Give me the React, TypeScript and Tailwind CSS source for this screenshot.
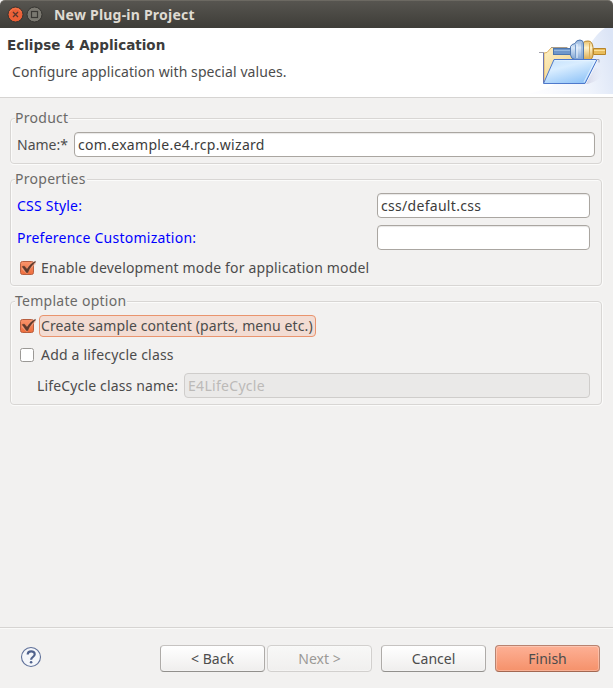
import type { ReactNode } from "react";

function Group({ title, className, children }: { title: string; className: string; children: ReactNode }) {
  return (
    <section className={`flex flex-col rounded-[4px] border border-[#d8d6d4] shadow-[0_1px_0_#fbfbfa,1px_0_0_#fbfbfa,inset_0_1px_0_#fbfbfa,inset_1px_0_0_#fbfbfa] ${className}`}>
      <h2 className="-mt-[11px] ml-1 h-5 shrink-0 self-start bg-[#f2f1f0] pr-px text-[14px] leading-5 tracking-[0.27px] text-[#6b6a68]">{title}</h2>
      {children}
    </section>
  );
}

function Field({ value, className, disabled = false }: { value: string; className: string; disabled?: boolean }) {
  const look = disabled
    ? "border-[#cfcdcb] bg-[#eae9e8] text-[#bcbab8] tracking-[0.3px]"
    : "border-[#aaa6a1] bg-white text-[#3c3c3c] tracking-[0.3px] shadow-[inset_0_1px_1px_#e8e7e6]";
  return <div className={`h-[25px] shrink-0 rounded-[4px] border pl-[3px] text-[14px] leading-[23px] ${look} ${className}`}>{value}</div>;
}

function CheckBox({ checked }: { checked: boolean }) {
  return (
    <svg width="18" height="18" viewBox="0 0 18 18" className="block shrink-0">
      <defs>
        <linearGradient id="check-fill" x1="0" y1="0" x2="0" y2="1">
          <stop offset="0" stopColor="#f9946c" />
          <stop offset="1" stopColor="#ee6d3c" />
        </linearGradient>
      </defs>
      <rect x="1.5" y="2.5" width="13" height="13" rx="2" fill={checked ? "url(#check-fill)" : "#fff"} stroke={checked ? "#b75f40" : "#9b9996"} />
      {checked && <path d="M3.7 8.6 7.6 12.4C9.4 9 12 6 16 3.4" fill="none" stroke="#fbb296" strokeWidth="3.6" strokeOpacity=".6" />}
      {checked && <path d="M3 7.6 5.3 6.9 8 10C10 6.8 12.6 4.2 16.3 2.3l.5.7C13.4 5.6 11 8.8 8.8 13.8H7.4Z" fill="#5f3a2c" stroke="#5f3a2c" strokeWidth=".3" />}
    </svg>
  );
}

function FolderArt() {
  return (
    <svg width="90" height="69" viewBox="0 0 90 69" className="block shrink-0">
      <defs>
        <linearGradient id="backdrop" x1="0" y1=".5" x2="1" y2=".3">
          <stop offset="0" stopColor="#fdfdff" />
          <stop offset=".6" stopColor="#f0f4fc" />
          <stop offset="1" stopColor="#dce5f6" />
        </linearGradient>
        <linearGradient id="folder-front" x1="0" y1="0" x2=".6" y2="1">
          <stop offset="0" stopColor="#c3e0fc" />
          <stop offset=".4" stopColor="#d9edff" />
          <stop offset="1" stopColor="#94c6f8" />
        </linearGradient>
        <linearGradient id="folder-back" x1="0" y1="0" x2="1" y2="1">
          <stop offset="0" stopColor="#fff1c5" />
          <stop offset="1" stopColor="#eac575" />
        </linearGradient>
        <linearGradient id="blue-plug" x1="0" y1="0" x2="0" y2="1">
          <stop offset="0" stopColor="#8fb0da" />
          <stop offset=".35" stopColor="#d8e7f8" />
          <stop offset="1" stopColor="#6c94c9" />
        </linearGradient>
        <linearGradient id="gold-plug" x1="0" y1="0" x2="0" y2="1">
          <stop offset="0" stopColor="#e9c16c" />
          <stop offset=".35" stopColor="#fff3cb" />
          <stop offset="1" stopColor="#d9a443" />
        </linearGradient>
        <linearGradient id="folder-shade" x1="0" y1="0" x2="1" y2="0">
          <stop offset="0" stopColor="#d3d4e6" />
          <stop offset="1" stopColor="#e5eaf6" stopOpacity="0" />
        </linearGradient>
      </defs>
      <path d="M90 0H82C74 5 68 14 63 24 56 38 45 48 30 57 22 61 14 64 5 66H90Z" fill="url(#backdrop)" />
      <path d="M63 56 72 40C84 41 83 50 65 56Z" fill="url(#folder-shade)" />
      <path d="M21 54V25l3-.5 4.5-5H44l2 3h19v13L62 54Z" fill="url(#folder-back)" stroke="#dcae5e" />
      <path d="M28 19.5H44l2 3" fill="none" stroke="#a99b87" />
      <path d="M20.5 55V24.5H16" fill="none" stroke="#7078ae" />
      <path d="M16 24.5h5" stroke="#a3a3ad" />
      <rect x="30.5" y="20.5" width="18" height="6" fill="#6f97ca" stroke="#4d76ae" />
      <path d="M31 22.5h17" stroke="#96b9e0" />
      <path d="M60.5 14.5q1-1.5 4.5-1.5 4.500 0 5 6.500v7.500q-.5 5-5 5.500h-4.500Z" fill="url(#gold-plug)" stroke="#b88529" />
      <path d="M70.5 20.500h12v6h-12Z" fill="#e8bc5b" stroke="#b88529" />
      <path d="M71 22.500h11" stroke="#fbe09a" />
      <path d="M66.500 15v15" stroke="#dcae58" />
      <path d="M47.500 18.500q1-2.500 4.500-3 1-3.500 5-3.500 3.500 0 3.500 4v15q-.5 3-4 3-3 0-4.500-2.500-4-.5-4.500-4.500Z" fill="url(#blue-plug)" stroke="#5279b0" />
      <path d="M52.500 16.500v14" stroke="#779dcc" />
      <path d="M54 16v14" stroke="#edf5ff" />
      <path d="M59 15v16" stroke="#7b9fce" />
      <path d="M31 31.500H74L62 55.500H20.500Z" fill="url(#folder-front)" stroke="#4e79cc" />
      <path d="M32 32.700H72L61 54" fill="none" stroke="#eaf5ff" strokeWidth=".8" />
      <path d="M73 31.500h3v3" fill="none" stroke="#a4a7bb" />
    </svg>
  );
}

function Button({ label, kind = "normal" }: { label: string; kind?: "normal" | "disabled" | "primary" }) {
  const look = {
    normal: "border-[#aeaba8] border-t-[#c6c3c1] border-b-[#92908d] from-white to-[#efeeed]",
    disabled: "border-[#d2d0ce] from-[#f8f8f7] to-[#f0efee] text-[#9b9996]",
    primary: "border-[#b88370] border-b-[#a26751] from-[#fdb095] to-[#f5916a]",
  }[kind];
  return <button className={`h-[27px] w-[105px] rounded-[4px] border bg-linear-to-b text-center text-[14px] leading-[24px] shadow-[inset_0_0_0_1px_rgba(255,255,255,0.28)] ${look}`}>{label}</button>;
}

export default function App() {
  return (
    <main className="flex h-[688px] w-[613px] flex-col overflow-hidden bg-[#f2f1f0] font-['Noto_Sans',sans-serif] text-[14px] text-[#4c4c4c]">
      <header className="flex h-7 shrink-0 items-center rounded-t-[5px] border-t border-[#6c6962] bg-linear-to-b from-[#575550] to-[#3e3d38] pl-[7px]">
        <svg width="37" height="18" viewBox="0 0 37 18">
          <circle cx="8.5" cy="8.5" r="7.5" fill="#ec6037" stroke="#353430" />
          <path d="M2.500 6Q8.500-1 14.500 6" fill="none" stroke="#f27c50" />
          <path d="m6 6 5 5m0-5-5 5" stroke="#59362c" strokeWidth="1.3" />
          <circle cx="27.5" cy="8.5" r="7.5" fill="#7b7971" stroke="#353430" />
          <rect x="24.5" y="5.5" width="6" height="6" fill="none" stroke="#3a3834" strokeWidth="1.2" />
        </svg>
        <h1 className="ml-[10px] whitespace-nowrap text-[14px] font-bold leading-6 tracking-[0.22px] text-[#dfdbd2]">New Plug-in Project</h1>
      </header>
      <div className="flex h-[70px] shrink-0 justify-between border-b border-[#d6d4d2] bg-white">
        <div className="pt-[7px] pl-[7px]">
          <p className="whitespace-nowrap font-['DejaVu_Sans',sans-serif] text-[13.5px] font-bold leading-5 text-[#3c3c3c]">Eclipse 4 Application</p>
          <p className="mt-[7px] ml-[5px] whitespace-nowrap leading-5 tracking-[0.08px]">Configure application with special values.</p>
        </div>
        <FolderArt />
      </div>

      <div className="flex flex-col gap-[15px] pt-5 pl-[10px]">
        <Group title="Product" className="h-[46px] w-[592px]">
          <div className="mt-1 flex items-center pl-[6px]">
            <span className="w-[57px] whitespace-nowrap leading-[25px]">Name:*</span>
            <Field value="com.example.e4.rcp.wizard" className="w-[521px]" />
          </div>
        </Group>
        <Group title="Properties" className="h-[107px] w-[592px]">
          <div className="mt-1 flex flex-col gap-[7px] pr-[11px] pl-[6px]">
            <div className="flex justify-between">
              <span className="leading-[25px] tracking-[0.22px] text-[#0000ff]">CSS Style:</span>
              <Field value="css/default.css" className="w-[213px]" />
            </div>
            <div className="flex justify-between">
              <span className="leading-[25px] tracking-[0.24px] text-[#0000ff]">Preference Customization:</span>
              <Field value="" className="w-[213px]" />
            </div>
          </div>
          <label className="mt-2 flex items-center pl-2 leading-5">
            <CheckBox checked />
            <span className="ml-1 whitespace-nowrap tracking-[0.17px]">Enable development mode for application model</span>
          </label>
        </Group>
        <Group title="Template option" className="h-[104px] w-[592px]">
          <label className="mt-1 flex items-center pl-2">
            <CheckBox checked />
            <span className="ml-[2px] h-[22px] w-[277px] whitespace-nowrap rounded-[4px] border border-[#e9946e] bg-[#f2dcd3] pl-px leading-[19px] tracking-[0.11px]">Create sample content (parts, menu etc.)</span>
          </label>
          <label className="mt-[8px] flex items-center pl-2 leading-5">
            <CheckBox checked={false} />
            <span className="ml-1 whitespace-nowrap tracking-[0.2px]">Add a lifecycle class</span>
          </label>
          <div className="mt-[8px] flex items-center pl-[26px]">
            <span className="w-[147px] whitespace-nowrap leading-[25px] tracking-[0.15px]">LifeCycle class name:</span>
            <Field value="E4LifeCycle" disabled className="w-[406px]" />
          </div>
        </Group>
      </div>

      <footer className="mt-auto flex h-[61px] shrink-0 border-t border-[#d6d4d2] pt-[17px] pl-5 shadow-[inset_0_1px_0_#fafaf9]">
        <svg width="22" height="22" viewBox="0 0 22 22" className="mt-px">
          <circle cx="11" cy="11" r="9.5" fill="#f4f6fa" stroke="#5f7099" strokeWidth="1.1" />
          <path d="M7.700 8.500c0-4.200 7-4.200 7-.3 0 2.700-3.600 2.900-3.600 5.500" fill="none" stroke="#4f618c" strokeWidth="2.2" />
          <circle cx="11.1" cy="16.2" r="1.3" fill="#4f618c" />
        </svg>
        <div className="ml-[118px] flex gap-[2px]">
          <Button label="< Back" />
          <Button label="Next >" kind="disabled" />
        </div>
        <div className="ml-[9px] flex gap-[9px]">
          <Button label="Cancel" />
          <Button label="Finish" kind="primary" />
        </div>
      </footer>
    </main>
  );
}
